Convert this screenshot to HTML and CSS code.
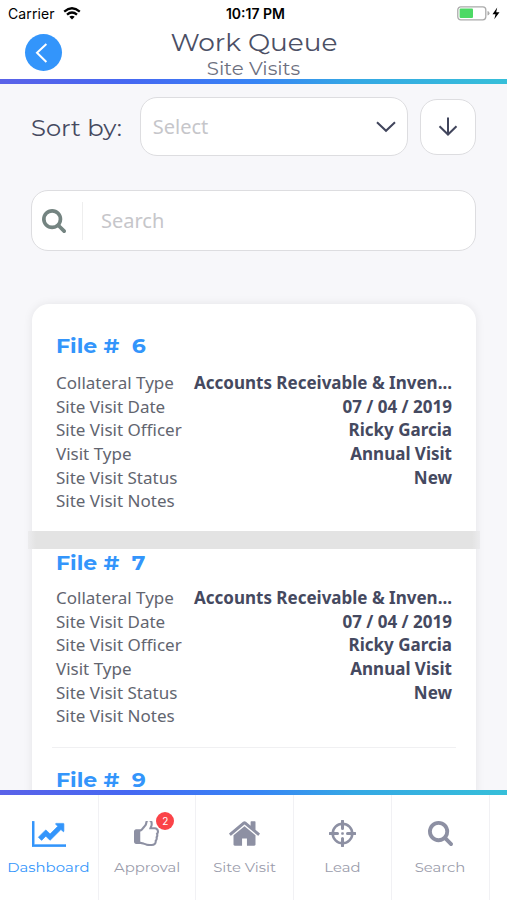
FILE: index.html
```html
<!DOCTYPE html>
<html lang="en">
<head>
<meta charset="utf-8">
<title>Work Queue</title>
<link rel="stylesheet" href="styles.css">
</head>
<body>
<div class="app">
  <header class="header">
    <div class="status">
      <div class="status-left"><span class="carrier">Carrier</span>
        <svg class="wifi" width="18" height="13" viewBox="0 0 18 13"><g fill="none" stroke="#000" stroke-width="2.3"><path d="M1.200 4.600Q9-2 16.800 4.600"/><path d="M4 7.700Q9 3.400 14 7.700"/></g><path d="M6.300 9.700Q9 7.600 11.700 9.700L9 12.600z"/></svg>
      </div>
      <span class="clock">10:17 PM</span>
      <div class="status-right">
        <svg width="44" height="15" viewBox="0 0 44 15"><rect x=".8" y=".8" width="28" height="13" rx="3" fill="#fff" stroke="#aaa" stroke-width="1.300"/><rect x="2.600" y="2.600" width="13.400" height="9.400" rx="1" fill="#4cd964"/><path d="M30.500 5q2 .5 2 2.300t-2 2.300z" fill="#aaa"/><path d="M40.200 1.500l-4.700 6.700h3l-1.200 5 5.200-7h-3.300z"/></svg>
      </div>
    </div>
    <div class="titlebar">
      <button class="back" aria-label="Back"><svg width="37" height="37" viewBox="0 0 37 37"><path d="M21.400 10l-9.400 8.700 9.400 9.300" fill="none" stroke="#fff" stroke-width="2"/></svg></button>
      <div class="titles">
        <h1><span class="wide">Work Queue</span></h1>
        <h2><span class="wide">Site Visits</span></h2>
      </div>
    </div>
  </header>
  <div class="rule"></div>
  <main class="content">
    <div class="sort">
      <span class="sort-label"><span class="wide">Sort by:</span></span>
      <div class="select"><span>Select</span><svg width="20" height="12" viewBox="0 0 20 12"><path d="M1 1.200l9 8.600 9-8.600" fill="none" stroke="#41455c" stroke-width="2"/></svg></div>
      <button class="direction" aria-label="Descending"><svg width="20" height="20" viewBox="0 0 20 20"><path d="M10 .5v17M1.500 9.200L10 17.500l8.500-8.300" fill="none" stroke="#41455c" stroke-width="2"/></svg></button>
    </div>
    <div class="search">
      <svg width="24" height="24" viewBox="0 128 1664 1664" fill="#748481"><use href="#glass"/></svg>
      <span class="search-text">Search</span>
    </div>
    <section class="card">
      <article class="file">
        <h3><span class="wide">File #&nbsp; 6</span></h3>
        <dl>
          <div><dt>Collateral Type</dt><dd>Accounts Receivable &amp; Inven...</dd></div>
          <div><dt>Site Visit Date</dt><dd>07 / 04 / 2019</dd></div>
          <div><dt>Site Visit Officer</dt><dd>Ricky Garcia</dd></div>
          <div><dt>Visit Type</dt><dd>Annual Visit</dd></div>
          <div><dt>Site Visit Status</dt><dd>New</dd></div>
          <div><dt>Site Visit Notes</dt><dd></dd></div>
        </dl>
      </article>
      <div class="band"></div>
      <article class="file second">
        <h3><span class="wide">File #&nbsp; 7</span></h3>
        <dl>
          <div><dt>Collateral Type</dt><dd>Accounts Receivable &amp; Inven...</dd></div>
          <div><dt>Site Visit Date</dt><dd>07 / 04 / 2019</dd></div>
          <div><dt>Site Visit Officer</dt><dd>Ricky Garcia</dd></div>
          <div><dt>Visit Type</dt><dd>Annual Visit</dd></div>
          <div><dt>Site Visit Status</dt><dd>New</dd></div>
          <div><dt>Site Visit Notes</dt><dd></dd></div>
        </dl>
      </article>
      <div class="divider"></div>
      <article class="file third">
        <h3><span class="wide">File #&nbsp; 9</span></h3>
      </article>
    </section>
  </main>
  <div class="rule"></div>
  <nav class="tabs">
    <a class="tab active"><svg width="34" height="26" viewBox="0 128 2048 1536"><path d="M2048 1536v128h-2048v-1536h128v1408h1920zM1920 288v435q0 21-19.500 29.500t-35.500-7.500l-121-121-633 633q-10 10-23 10t-23-10l-233-233-256 256-192-192 425-425q10-10 23-10t23 10l233 233 464-464-121-121q-16-16-7.500-35.500t29.500-19.500h435q14 0 23 9t9 23z" stroke="currentColor" stroke-width="40"/></svg><span class="wide">Dashboard</span></a>
    <a class="tab"><span class="badge-wrap"><svg width="25" height="25" viewBox="0 128 1536 1536"><path d="M60 760h300v690H60z" opacity=".75"/><path d="M1408 768q0-51-39-89.500t-89-38.500h-352q0-58 48-159.500t48-160.500q0-98-32-145t-128-47q-26 26-38 85t-30.500 125.500-59.500 109.500q-22 23-77 91-4 5-23 30t-31.500 41-34.500 42.500-40 44-38.500 35.500-40 27-35.500 9h-32v640h32q13 0 31.500 3t33 6.500 38 11 35 11.500 35.500 12.500 29 10.500q211 73 342 73h121q192 0 192-167 0-26-5-56 30-16 47.500-52.500t17.500-73.500-18-69q53-50 53-119 0-25-10-55.500t-25-47.500q32-1 53.500-47t21.500-81zm128-1q0 89-49 163 9 33 9 69 0 77-38 144 3 21 3 43 0 101-60 178 1 139-85 219.500t-227 80.500h-129q-96 0-189.500-22.500t-216.500-65.500q-116-40-138-40h-288q-53 0-90.500-37.500t-37.500-90.500v-640q0-53 37.500-90.500t90.500-37.500h274q36-24 137-155 58-75 107-128 24-25 35.500-85.500t30.500-126.500 62-108q39-37 90-37 84 0 151 32.500t102 101.500 35 186q0 93-48 192h176q104 0 180 76t76 179z"/></svg><i class="badge">2</i></span><span class="wide">Approval</span></a>
    <a class="tab"><svg width="31" height="25" viewBox="20 250 1624 1290"><path d="M1408 992v480q0 26-19 45t-45 19h-384v-384h-256v384h-384q-26 0-45-19t-19-45v-480q0-1 .5-3t.5-3l575-474 575 474q1 2 1 6zm223-69l-62 74q-8 9-21 11h-3q-13 0-21-7l-692-577-692 577q-12 8-24 7-13-2-21-11l-62-74q-8-10-7-23.500t11-21.500l719-599q32-26 76-26t76 26l244 204v-195q0-14 9-23t23-9h192q14 0 23 9t9 23v408l219 182q10 8 11 21.500t-7 23.500z"/></svg><span class="wide">Site Visit</span></a>
    <a class="tab"><svg width="27" height="27" viewBox="0 0 27 27"><g fill="none" stroke="currentColor"><circle cx="13.500" cy="13.500" r="9.800" stroke-width="2.500"/><path d="M13.500 1v7.500M13.500 18.500V26M1 13.500h7.500M18.500 13.500H26" stroke-width="3" stroke-linecap="round"/></g><rect x="12.200" y="12.200" width="2.600" height="2.600" rx=".8"/></svg><span class="wide">Lead</span></a>
    <a class="tab"><svg width="25" height="25" viewBox="0 128 1664 1664"><path id="glass" d="M1152 832q0-185-131.500-316.500T704 384 387.500 515.500 256 832t131.500 316.500T704 1280t316.500-131.500T1152 832zm512 832q0 52-38 90t-90 38q-54 0-90-38l-343-342q-179 124-399 124-143 0-273.500-55.500t-225-150T55.500 1105.500 0 832t55.500-273.500 150-225 225-150T704 128t273.500 55.500 225 150 150 225T1408 832q0 220-124 399l343 343q37 37 37 90z"/></svg><span class="wide">Search</span></a>
  </nav>
</div>
</body>
</html>
```
FILE: styles.css
```css
* { box-sizing: border-box; }
body { margin: 0; background: #fff; font-family: "Noto Sans", sans-serif; color: #454960; }
h1, h2, h3, dl, dd { margin: 0; }
button { padding: 0; font: inherit; }
svg { display: block; flex: none; }
.app { width: 507px; height: 900px; display: flex; flex-direction: column; overflow: hidden; }
.wide { display: inline-block; font-family: Montserrat, Inter, sans-serif; white-space: nowrap; transform: scaleX(1.1); }

.header { height: 79px; flex: none; }
.status { height: 27px; display: grid; grid-template-columns: 1fr auto 1fr; align-items: center; padding: 0 6px 0 8px; font-family: Inter, sans-serif; color: #000; }
.status-left { display: flex; align-items: center; gap: 8px; }
.carrier { font-size: 14px; letter-spacing: .1px; }
.clock { font-size: 14px; font-weight: 600; padding-left: 2px; }
.status-right { display: flex; justify-content: flex-end; }
.titlebar { height: 52px; display: grid; grid-template-columns: 62px 1fr 62px; padding: 0; }
.back { width: 37px; height: 37px; margin: 7px 0 0 25px; border: 0; border-radius: 50%; background: #3395fb; }
.titles { display: flex; flex-direction: column; align-items: center; }
h1 { font-size: 24px; line-height: 30px; font-weight: 400; color: #4b4f65; }
h2 { font-size: 18px; line-height: 21px; font-weight: 400; color: #6d7080; }
.rule { height: 5px; flex: none; background: linear-gradient(90deg, #5a62e8 0%, #4668f2 25%, #3884f5 50%, #35a8e4 70%, #36bfd9 100%); }

.content { flex: 1; min-height: 0; overflow: hidden; background: #f7f7fa; padding: 13px 31px 0; }
.sort { height: 59px; display: flex; align-items: center; }
.sort-label { width: 109px; font-size: 22px; }
.sort-label .wide { transform-origin: left; }
.select { width: 269px; height: 59px; display: flex; align-items: center; justify-content: space-between; padding: 0 11px 0 12px; background: #fff; border: 1.5px solid #dddde0; border-radius: 17px; font-size: 20px; color: #c6c6ca; }
.direction { width: 56px; height: 56px; margin-left: 12px; display: grid; place-items: center; background: #fff; border: 1.5px solid #dddde0; border-radius: 17px; }
.search { height: 61px; margin-top: 34px; display: flex; align-items: center; padding-left: 10px; background: #fff; border: 1.5px solid #dddde0; border-radius: 17px; }
.search-text { height: 38px; margin-left: 16px; padding-left: 18px; border-left: 1px solid #eee; font-size: 20px; line-height: 37px; color: #c6c6ca; }

.card { width: 444px; margin: 53px 0 0 1px; height: 520px; background: #fff; border-radius: 17px; box-shadow: 0 0 10px rgba(0, 0, 0, .08); }
.file { height: 227px; padding: 27px 24px 0; }
h3 { height: 30px; line-height: 30px; font-size: 20px; font-weight: 700; color: #3395fb; }
h3 .wide { transform-origin: left; }
dl { padding-top: 10px; }
dl div { display: flex; justify-content: space-between; height: 23.650px; line-height: 23.650px; font-size: 17px; white-space: nowrap; }
dt { color: #62656f; }
dd { font-weight: 700; }
.band { height: 18px; margin: 0 -4px; background: linear-gradient(90deg, #ececee, #e3e3e3 8px, #e3e3e3 444px, #ececee); }
.second { height: 198px; padding-top: 0; }
.second h3 { height: 27px; line-height: 27px; }
.divider { height: 1px; margin: 0 20px; background: #f0f0f2; }
.third { height: 60px; padding-top: 17px; }

.tabs { height: 105px; flex: none; display: flex; background: #fff; }
.tab { width: 97.750px; height: 105px; display: grid; grid-template-rows: 27px 22px; row-gap: 9px; padding-top: 25px; align-items: center; justify-items: center; border-right: 1px solid #f1f1f4; font-size: 13.500px; color: #9a9cab; fill: currentColor; }
.tab:first-child { width: 98.500px; }
.tab svg { color: #8d90a3; }
.tab.active, .tab.active svg { color: #3395fb; }
.badge-wrap { position: relative; }
.badge { position: absolute; left: 22px; top: -9px; width: 18px; height: 18px; border-radius: 50%; background: #fb4348; color: #fff; font: 10px/18px Inter, sans-serif; text-align: center; }
```
